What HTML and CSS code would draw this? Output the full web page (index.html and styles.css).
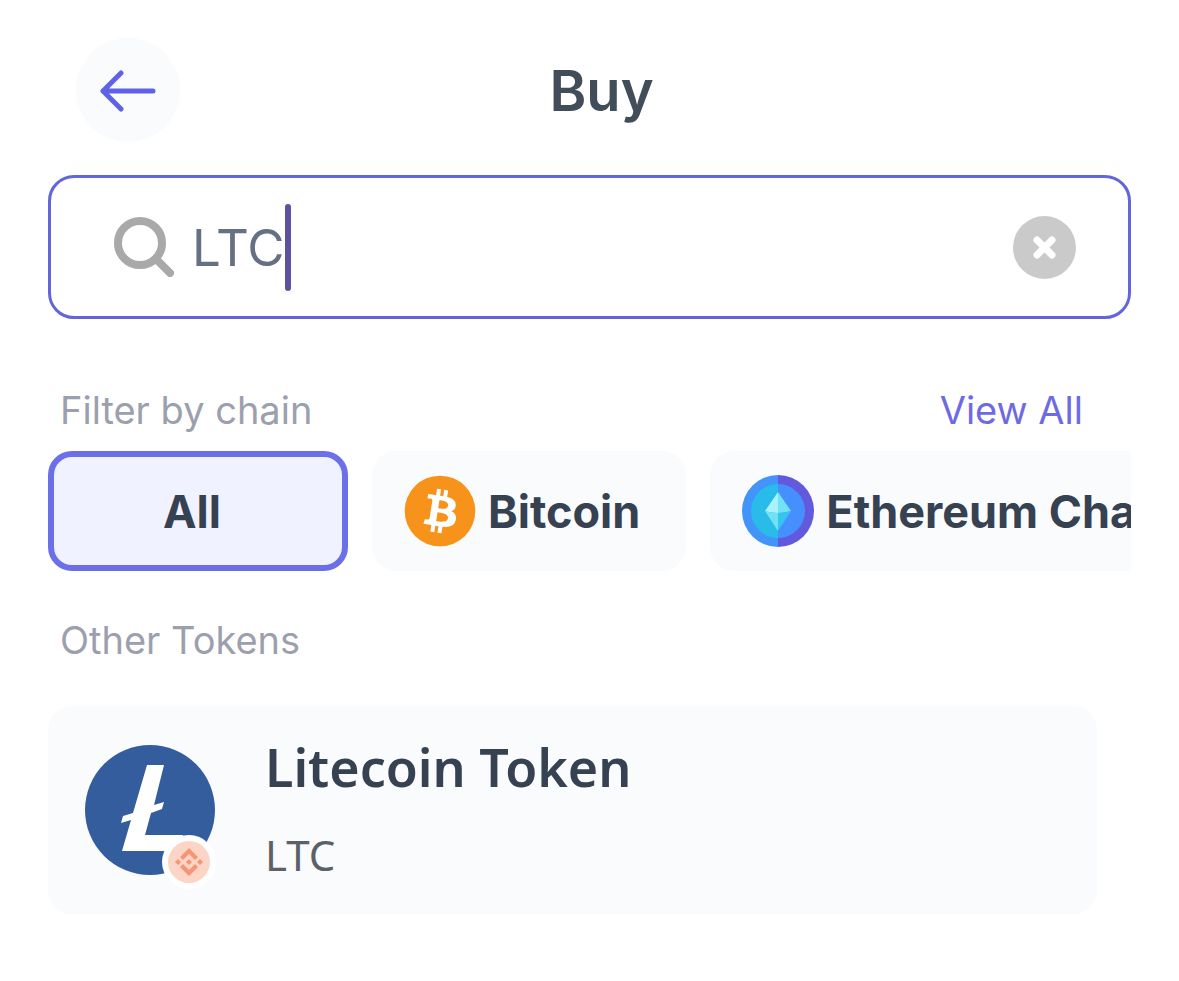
FILE: index.html
```
<!DOCTYPE html>
<html lang="en">
<head>
  <meta charset="UTF-8"/>
  <meta name="viewport" content="width=device-width,initial-scale=1.0"/>
  <title>Buy</title>
  <link rel="stylesheet" href="styles.css">
</head>
<body>

<header class="topbar">
  <button class="back" type="button" aria-label="Back">
    <svg width="56" height="44" viewBox="0 0 56 44" fill="none" stroke="#5f62e8" stroke-width="5" stroke-linecap="round" stroke-linejoin="round">
      <path d="M53 23H3M21 5L3 23l18 18"/>
    </svg>
  </button>
  <h1>Buy</h1>
</header>

<main>
  <form class="search" role="search">
    <svg width="60" height="60" viewBox="0 0 60 60" fill="none" stroke="#a9a9a9" stroke-width="8" stroke-linecap="round">
      <circle cx="26" cy="26" r="22"/>
      <path d="M43 43l13 13"/>
    </svg>
    <div class="field">
      <input type="text" value="LTC" aria-label="Search tokens">
      <span class="caret"></span>
    </div>
    <button class="clear" type="reset" aria-label="Clear">
      <svg width="23" height="23" viewBox="0 0 23 23" stroke="#fff" stroke-width="7" stroke-linecap="round">
        <path d="M4 4l15 15M19 4L4 19"/>
      </svg>
    </button>
  </form>

  <div class="section-head">
    <h2>Filter by chain</h2>
    <a href="#">View All</a>
  </div>

  <div class="chips">
    <button class="chip active" type="button">All</button>
    <button class="chip" type="button">
      <svg width="72" height="72" viewBox="0 0 32 32">
        <circle cx="16" cy="16" r="15.7" fill="#f7931a"/>
        <path fill="#fff" transform="rotate(-5 16 16)" d="M23.189 14.02c.314-2.096-1.283-3.223-3.465-3.975l.708-2.84-1.728-.43-.69 2.765c-.454-.114-.92-.22-1.385-.326l.695-2.783L15.596 6l-.708 2.839c-.376-.086-.746-.17-1.104-.26l.002-.009-2.384-.595-.46 1.846s1.283.294 1.256.312c.7.175.826.638.805 1.006l-.806 3.235c.048.012.11.03.18.057l-.183-.045-1.13 4.532c-.086.212-.303.531-.793.41.018.025-1.256-.313-1.256-.313l-.858 1.978 2.25.561c.418.105.828.215 1.231.318l-.715 2.872 1.727.43.708-2.84c.472.127.93.245 1.378.357l-.706 2.828 1.728.43.715-2.866c2.948.558 5.164.333 6.097-2.333.752-2.146-.037-3.385-1.588-4.192 1.13-.26 1.98-1.003 2.207-2.538zm-3.95 5.538c-.533 2.147-4.148.986-5.32.695l.95-3.805c1.172.293 4.929.872 4.37 3.11zm.535-5.569c-.487 1.953-3.495.96-4.47.717l.86-3.45c.975.243 4.118.696 3.61 2.733z"/>
      </svg>
      Bitcoin
    </button>
    <button class="chip" type="button">
      <svg width="72" height="72" viewBox="0 0 72 72">
        <path fill="#4294fb" d="M36 0a36 36 0 0 0 0 72z"/>
        <path fill="#6359df" d="M36 0a36 36 0 0 1 0 72z"/>
        <path fill="#2abce9" d="M36 9a27 27 0 0 0 0 54z"/>
        <path fill="#468fff" d="M36 9a27 27 0 0 1 0 54z"/>
        <path fill="#a8f3fb" d="M36 17L23 36q6 2 13 2z"/>
        <path fill="#72e2f5" d="M36 17l13 19q-6 2-13 2z"/>
        <path fill="#6fe3f3" d="M23 36q6 2 13 2v18z"/>
        <path fill="#35c5ef" d="M49 36q-6 2-13 2v18z"/>
      </svg>
      Ethereum Chain
    </button>
  </div>

  <h2>Other Tokens</h2>

  <a class="token" href="#">
    <span class="token-icon">
      <svg width="130" height="130" viewBox="0 0 130 130">
        <circle cx="65" cy="65" r="65" fill="#345d9d"/>
        <path fill="#fff" d="M62 20h17L69 60l10-3-2 7-11 4-6 22h38l-4 16H37l9-31-10 3 2-7 10-3z"/>
      </svg>
      <svg class="badge" width="54" height="54" viewBox="0 0 54 54">
        <circle cx="27" cy="27" r="27" fill="#fff"/>
        <circle cx="27" cy="27" r="21" fill="#fdd5c6"/>
        <g fill="#f69573">
          <path d="M27 13l9 9-3 3-6-6-6 6-3-3zM27 41l9-9-3-3-6 6-6-6-3 3z"/>
          <path d="M27 24l3 3-3 3-3-3zM16 24l3 3-3 3-3-3zM38 24l3 3-3 3-3-3z"/>
        </g>
      </svg>
    </span>
    <span class="token-text">
      <strong>Litecoin Token</strong>
      <span>LTC</span>
    </span>
  </a>
</main>

</body>
</html>
```
FILE: styles.css
```
/* ========== Reset ========== */
* { margin:0; padding:0; box-sizing:border-box }
body { font-family:Inter,sans-serif; background:#fff; color:#364152; padding:38px 48px 48px }
button { font:inherit; color:inherit; border:0; cursor:pointer }
a { text-decoration:none; color:inherit }
svg { display:block; flex-shrink:0 }

/* ========== Top bar ========== */
.topbar {
  display: grid;
  grid-template-columns: 104px 1fr;
  align-items: center;
  padding: 0 108px 0 28px;
}
.back {
  display: flex;
  align-items: center;
  justify-content: center;
  height: 104px;
  border-radius: 50%;
  background: #fafbfd;
}
h1 { padding-top:2px; font-size:56px; font-weight:600; text-align:center; color:#414d59 }

/* ========== Search ========== */
.search {
  display: flex;
  align-items: center;
  gap: 18px;
  height: 144px;
  margin-top: 33px;
  padding: 0 52px 0 63px;
  border: 3px solid #6265dc;
  border-radius: 26px;
}
.field { flex:1; display:flex; align-items:center }
.field input {
  field-sizing: content;
  font: 400 51px Inter, sans-serif;
  color: #667085;
  border: 0;
  outline: 0;
  background: none;
}
.caret { width:6px; height:87px; border-radius:3px; background:#5e519f }
.clear {
  display: flex;
  align-items: center;
  justify-content: center;
  width: 63px;
  height: 63px;
  border-radius: 50%;
  background: #cacaca;
}

/* ========== Chains ========== */
h2, .section-head a { font-size:38px; line-height:48px; font-weight:400 }
h2 { color:#9ca0ae; padding-left:12px }
.section-head {
  display: flex;
  justify-content: space-between;
  margin-top: 67px;
  padding-right: 48px;
}
.section-head a { color:#6e6ae4 }
.chips {
  display: flex;
  gap: 24px;
  margin: 17px 0 45px;
  overflow: hidden;
}
.chip {
  display: flex;
  flex-shrink: 0;
  align-items: center;
  justify-content: center;
  gap: 12px;
  height: 120px;
  padding: 0 46px 0 32px;
  border-radius: 24px;
  background: #fafbfd;
  font-size: 45px;
  font-weight: 700;
  white-space: nowrap;
}
.chip.active {
  width: 300px;
  padding: 0 12px 0 0;
  border: 6px solid #6b6fea;
  background: #f1f2ff;
}

/* ========== Token list ========== */
.token {
  display: flex;
  align-items: center;
  gap: 50px;
  height: 208px;
  margin: 42px 34px 0 0;
  padding: 0 37px;
  border-radius: 24px;
  background: #fafbfd;
}
.token-icon { position:relative }
.badge { position:absolute; right:-1px; bottom:-14px }
.token-text {
  display: flex;
  flex-direction: column;
  gap: 24px;
  padding-top: 2px;
  font-family: "Noto Sans", sans-serif;
}
.token-text strong { font-size:52px; line-height:64px; font-weight:600 }
.token-text span { font-size:42px; line-height:64px; color:#5b6166 }
```
